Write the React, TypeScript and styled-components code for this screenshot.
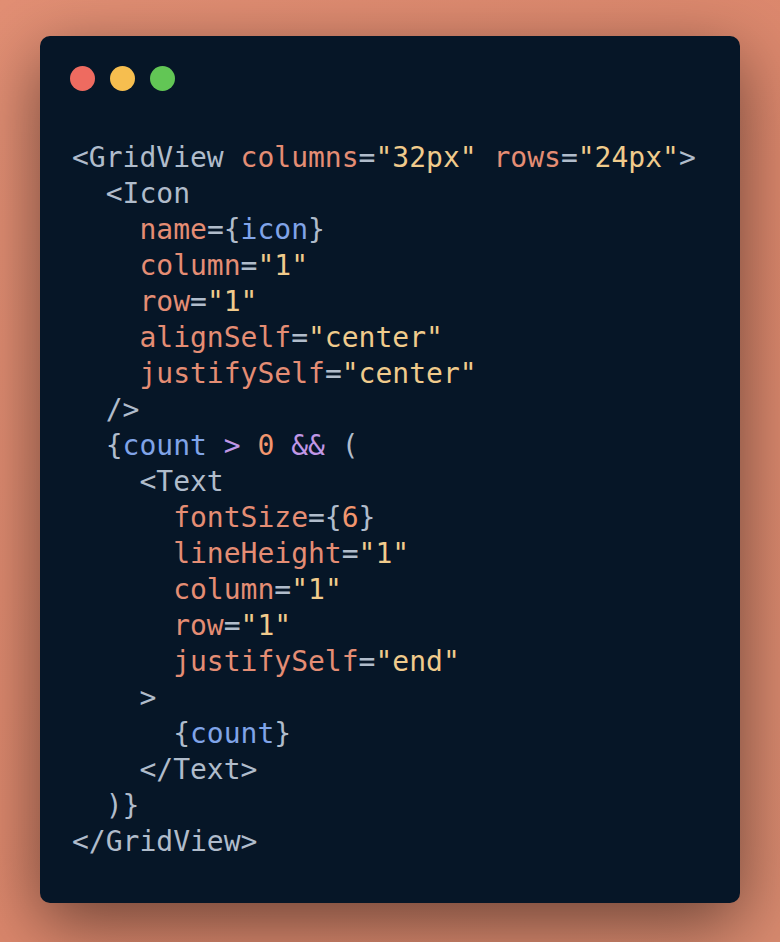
import React from "react";
import styled, { createGlobalStyle } from "styled-components";

const Global = createGlobalStyle`
  html, body { margin: 0; padding: 0; }
  body {
    background: linear-gradient(135deg, #e28f74 0%, #db876c 55%, #d88a6f 100%);
    width: 780px;
    height: 942px;
    overflow: hidden;
  }
`;

const Page = styled.div`
  width: 780px;
  height: 942px;
  box-sizing: border-box;
  padding: 36px 40px 39px 40px;
  display: flex;
`;

const Window = styled.div`
  flex: 1;
  background: #061627;
  border-radius: 10px;
  box-shadow: rgba(0, 0, 0, 0.5) 0px 20px 68px;
  padding: 66px 32px 0 32px;
  display: flex;
  flex-direction: column;
  position: relative;
`;

const Controls = styled.div`
  position: absolute;
  top: 30px;
  left: 30px;
  display: flex;
  gap: 15px;
`;

const Dot = styled.span<{ $color: string }>`
  width: 25px;
  height: 25px;
  border-radius: 50%;
  background: ${(p) => p.$color};
  display: block;
`;

const Code = styled.pre`
  margin: 38px 0 0 0;
  font-family: "DejaVu Sans Mono", "Liberation Mono", monospace;
  font-size: 28px;
  line-height: 36px;
  color: #b0bccb;
  white-space: pre;
`;

type Kind = "p" | "a" | "s" | "v" | "k" | "n";
const colors: Record<Kind, string> = {
  p: "#b0bccb",
  a: "#e48d74",
  s: "#f0cb8c",
  v: "#80a4e8",
  k: "#c097e6",
  n: "#f2966e",
};

const Tok = styled.span<{ $k: Kind }>`
  color: ${(p) => colors[p.$k]};
`;

type Line = [Kind, string][];

const lines: Line[] = [
  [["p", "<GridView "], ["a", "columns"], ["p", "="], ["s", "\"32px\""], ["p", " "], ["a", "rows"], ["p", "="], ["s", "\"24px\""], ["p", ">"]],
  [["p", "  <Icon"]],
  [["p", "    "], ["a", "name"], ["p", "={"], ["v", "icon"], ["p", "}"]],
  [["p", "    "], ["a", "column"], ["p", "="], ["s", "\"1\""]],
  [["p", "    "], ["a", "row"], ["p", "="], ["s", "\"1\""]],
  [["p", "    "], ["a", "alignSelf"], ["p", "="], ["s", "\"center\""]],
  [["p", "    "], ["a", "justifySelf"], ["p", "="], ["s", "\"center\""]],
  [["p", "  />"]],
  [["p", "  {"], ["v", "count"], ["p", " "], ["k", ">"], ["p", " "], ["n", "0"], ["p", " "], ["k", "&&"], ["p", " ("]],
  [["p", "    <Text"]],
  [["p", "      "], ["a", "fontSize"], ["p", "={"], ["n", "6"], ["p", "}"]],
  [["p", "      "], ["a", "lineHeight"], ["p", "="], ["s", "\"1\""]],
  [["p", "      "], ["a", "column"], ["p", "="], ["s", "\"1\""]],
  [["p", "      "], ["a", "row"], ["p", "="], ["s", "\"1\""]],
  [["p", "      "], ["a", "justifySelf"], ["p", "="], ["s", "\"end\""]],
  [["p", "    >"]],
  [["p", "      {"], ["v", "count"], ["p", "}"]],
  [["p", "    </Text>"]],
  [["p", "  )}"]],
  [["p", "</GridView>"]],
];

export default function App() {
  return (
    <>
      <Global />
      <Page>
        <Window>
          <Controls>
            <Dot $color="#ee6b60" />
            <Dot $color="#f6be4f" />
            <Dot $color="#62c655" />
          </Controls>
          <Code>
            {lines.map((line, i) => (
              <div key={i}>
                {line.map(([k, t], j) => (
                  <Tok key={j} $k={k}>
                    {t}
                  </Tok>
                ))}
              </div>
            ))}
          </Code>
        </Window>
      </Page>
    </>
  );
}
